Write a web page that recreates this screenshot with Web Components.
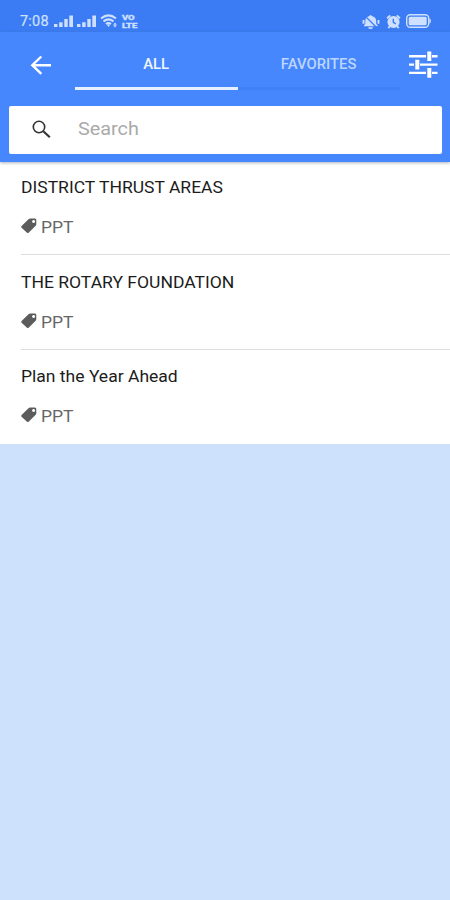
<!DOCTYPE html>
<html lang="en">
<head>
<meta charset="UTF-8">
<meta name="viewport" content="width=device-width, initial-scale=1">
<title>Documents</title>
<style>
    body {
        margin: 0;
        min-height: 100vh;
        background: #cde0fc;
        font-family: Roboto, "Liberation Sans", sans-serif;
        overflow: hidden;
    }
</style>
</head>
<body>
<doc-app>
    <status-bar slot="status" time="7:08"></status-bar>
    <app-header slot="header">
        <tab-item active>ALL</tab-item>
        <tab-item>FAVORITES</tab-item>
    </app-header>
    <search-box slot="header" placeholder="Search"></search-box>
    <doc-row tag="PPT">DISTRICT THRUST AREAS</doc-row>
    <doc-row tag="PPT">THE ROTARY FOUNDATION</doc-row>
    <doc-row tag="PPT">Plan the Year Ahead</doc-row>
</doc-app>

<script>
class DocApp extends HTMLElement {
    constructor() {
        super();
        this.attachShadow({ mode: "open" });
        this.shadowRoot.innerHTML = `
            <style>
                :host { display: block; }
                .top {
                    position: relative;
                    height: 130px;
                    background: #4787fd;
                    box-shadow: 0 1px 3px rgba(70, 90, 100, 0.45);
                }
                main { background: #fff; }
            </style>
            <slot name="status"></slot>
            <div class="top"><slot name="header"></slot></div>
            <main><slot></slot></main>
        `;
    }
}

class StatusBar extends HTMLElement {
    constructor() {
        super();
        this.attachShadow({ mode: "open" });
    }

    connectedCallback() {
        const bars = `
            <svg width="19" height="12" viewBox="0 0 19 12">
                <path d="M0 9h3.4v3H0zM5.2 7.3h3.4V12H5.2zM10.3 4h3.4v8h-3.4zM15.3 0.5H19V12h-3.7z"/>
            </svg>`;

        this.shadowRoot.innerHTML = `
            <style>
                :host {
                    display: flex;
                    align-items: center;
                    box-sizing: border-box;
                    height: 32px;
                    padding: 11px 18px 0 20px;
                    background: #3b7cf5;
                    color: #cfe0ff;
                }
                svg { display: block; fill: currentColor; }
                .time { font-size: 14.5px; line-height: 21px; letter-spacing: 0.2px; width: 34px; -webkit-text-stroke: 0.2px currentColor; }
                .signal { display: flex; gap: 4px; padding-bottom: 1px; }
                .wifi { margin: 0 0 1px 4px; }
                .volte {
                    display: grid;
                    grid-template-rows: 8px 8px;
                    justify-items: start;
                    margin-left: 4px;
                    font-size: 7px;
                    font-weight: 700;
                    line-height: 8px;
                    -webkit-text-stroke: 0.4px currentColor;
                }
                .volte span { transform: scaleX(1.35); transform-origin: left; }
                .right { display: flex; align-items: center; gap: 5px; margin-left: auto; padding-bottom: 1px; }
            </style>
            <span class="time">${this.getAttribute("time")}</span>
            <div class="signal">${bars}${bars}</div>
            <svg class="wifi" width="18" height="14" viewBox="0 0 18 14">
                <g fill="none" stroke="currentColor" stroke-width="2">
                    <path d="M1 4.6Q8.5-1.8 16 4.6M3.5 7.4q5-4 10 0M6 10q2.5-2 5 0"/>
                </g>
                <path d="M6.8 10.8 8.5 13l1.7-2.2q-1.7-1-3.4 0zM13.2 10.7 15 8.5l1.8 2.2zM13.2 11.3l1.8 2.2 1.8-2.2z"/>
            </svg>
            <div class="volte"><span>VO</span><span>LTE</span></div>
            <div class="right">
                <svg width="20" height="15" viewBox="0 0 20 16">
                    <path d="M9.5 1a1.2 1.2 0 0 1 1.2 1.1C14 2.7 15.5 4.8 15.5 7.3v3.2l1.6 1.8v.7H2.5v-.7l1.4-1.8V7.3c0-2.5 1.5-4.6 4.5-5.2A1.2 1.2 0 0 1 9.5 1zM7 14h5a2.5 2 0 0 1-5 0z"/>
                    <path d="M3 1.5 16.5 15" stroke="#3b7cf5" stroke-width="1.4"/>
                    <path d="M2 6.5v4M18 6.5v4" stroke="currentColor" stroke-width="2"/>
                </svg>
                <svg width="15" height="15" viewBox="0 0 15 16">
                    <circle cx="7.5" cy="8.5" r="6.5"/>
                    <path d="M.7 4.5 4 1.5M14.3 4.5 11 1.5M3.5 13l-1.5 2M11.5 13l1.5 2" stroke="currentColor" stroke-width="2"/>
                    <path d="M7.3 5v4l2.7 1.5" fill="none" stroke="#3b7cf5" stroke-width="1.5"/>
                </svg>
                <svg width="26" height="14" viewBox="0 0 26 14">
                    <rect x=".7" y=".7" width="22" height="12.6" rx="3.5" fill="none" stroke="currentColor" stroke-width="1.4"/>
                    <rect x="2.7" y="2.7" width="18" height="8.6" rx="1.5"/>
                    <path d="M23.5 4q3 3 0 6z"/>
                </svg>
            </div>
        `;
    }
}

class AppHeader extends HTMLElement {
    constructor() {
        super();
        this.attachShadow({ mode: "open" });
        this.shadowRoot.innerHTML = `
            <style>
                :host {
                    display: grid;
                    grid-template-columns: 75px 325px 50px;
                    height: 73.5px;
                    color: #fff;
                }
                svg { display: block; }
                .back { margin: 22px 0 0 29px; }
                .filter { margin: 19px 0 0 8px; }
                nav {
                    display: grid;
                    grid-template-columns: 1fr 1fr;
                    height: 58px;
                }
            </style>
            <svg class="back" width="23" height="22" viewBox="0 0 23 22" fill="none" stroke="currentColor" stroke-width="2.4">
                <path d="M22 11.2H3M12.3 2.5 3.3 11.2l9 8.7"/>
            </svg>
            <nav><slot></slot></nav>
            <svg class="filter" width="30" height="28" viewBox="0 0 30 28" fill="none" stroke="currentColor">
                <path stroke-width="2.4" d="M1 5.3h17M24 5.3h5.5M1 13.6h5M12 13.6h17.5M1 21.9h17M24 21.9h5.5"/>
                <path stroke-width="4" d="M21.3.5v9.6M9.3 8.8v9.6M21.3 17.1v9.6"/>
            </svg>
        `;
    }
}

class TabItem extends HTMLElement {
    constructor() {
        super();
        this.attachShadow({ mode: "open" });
        this.shadowRoot.innerHTML = `
            <style>
                :host {
                    box-sizing: border-box;
                    display: flex;
                    align-items: center;
                    justify-content: center;
                    padding-top: 8px;
                    border-bottom: 3px solid #4181f8;
                    color: #bdd6ff;
                    font-size: 14px;
                    font-weight: 500;
                }
                :host([active]) { border-color: #e6f0ff; color: #f0f6ff; }
                span { transform: scaleX(1.06); }
            </style>
            <span><slot></slot></span>
        `;
    }
}

class SearchBox extends HTMLElement {
    constructor() {
        super();
        this.attachShadow({ mode: "open" });
    }

    connectedCallback() {
        this.shadowRoot.innerHTML = `
            <style>
                :host {
                    box-sizing: border-box;
                    display: flex;
                    align-items: center;
                    height: 48.5px;
                    margin: 0 8px 0 9px;
                    padding-left: 23px;
                    border-radius: 2px;
                    background: #fff;
                    color: #aaa;
                    font-size: 18px;
                }
                svg { display: block; width: 19px; height: 18px; margin: 0 27px 1px 0; }
                span { line-height: 22px; padding-bottom: 2px; transform: scaleX(1.1); transform-origin: left; }
            </style>
            <svg viewBox="0 0 19 18" fill="none" stroke="#333">
                <circle cx="7" cy="7" r="5.7" stroke-width="1.6"/>
                <path d="M11.3 11.3 17.8 17.2" stroke-width="2.2"/>
            </svg>
            <span>${this.getAttribute("placeholder")}</span>
        `;
    }
}

class DocRow extends HTMLElement {
    constructor() {
        super();
        this.attachShadow({ mode: "open" });
    }

    connectedCallback() {
        this.shadowRoot.innerHTML = `
            <style>
                :host {
                    box-sizing: border-box;
                    display: block;
                    height: 95px;
                    margin-left: 21px;
                    padding-top: 18px;
                    border-bottom: 1px solid #ddd;
                    color: #1c1c1c;
                    font-size: 16px;
                    line-height: 20px;
                }
                :host(:nth-of-type(1)) { height: 93px; padding-top: 16px; }
                :host(:last-child) { height: 94px; padding-top: 17px; border: 0; }
                .title, .tag span { transform: scaleX(1.095); transform-origin: left; }
                .title { width: max-content; }
                .tag { display: flex; align-items: center; gap: 4px; margin-top: 20px; color: #666; }
                svg { display: block; margin-bottom: 4px; }
            </style>
            <div class="title"><slot></slot></div>
            <div class="tag">
                <svg width="16" height="16" viewBox="0 0 16 16">
                    <path fill="#5c5c5c" fill-rule="evenodd" d="M7.5 1.2Q8.3.5 9.2.5L14 .6q1.3.1 1.3 1.3V6.3q0 .8-.6 1.4L7.6 14.7q-.8.7-1.6 0L.6 9.7q-.7-.8 0-1.6zM12.6 2a1.5 1.5 0 1 0 .01 0z"/>
                </svg>
                <span>${this.getAttribute("tag")}</span>
            </div>
        `;
    }
}

customElements.define("doc-app", DocApp);
customElements.define("status-bar", StatusBar);
customElements.define("app-header", AppHeader);
customElements.define("tab-item", TabItem);
customElements.define("search-box", SearchBox);
customElements.define("doc-row", DocRow);
</script>
</body>
</html>
